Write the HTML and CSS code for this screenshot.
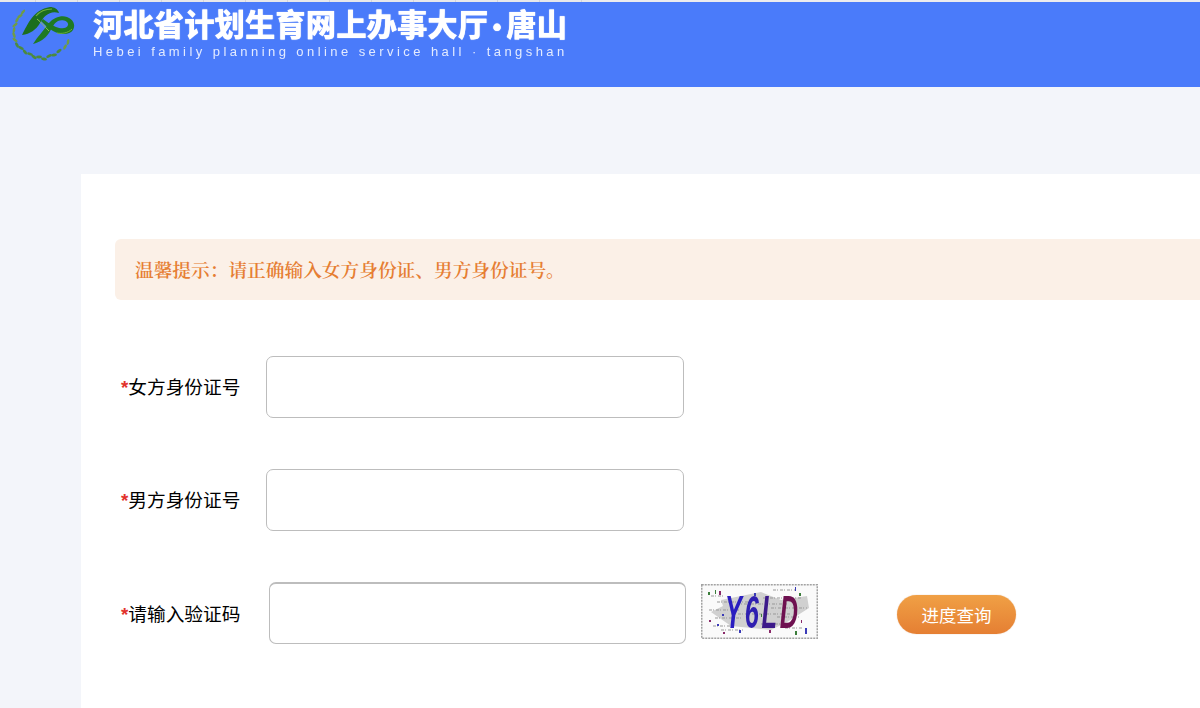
FILE: index.html
```html
<!DOCTYPE html>
<html lang="zh-CN">
<head>
<meta charset="utf-8">
<title>河北省计划生育网上办事大厅·唐山</title>
<link rel="stylesheet" href="styles.css">
</head>
<body>
<div class="topstrip"></div>
<header class="banner">
  <svg class="logo" width="66" height="60" viewBox="12 5 66 60">
    <g fill="#6f9c45">
      <ellipse cx="23" cy="12" rx="3" ry="1.3" transform="rotate(-50 23 12)"/>
      <ellipse cx="20" cy="16" rx="3" ry="1.3" transform="rotate(-30 20 16)"/>
      <ellipse cx="17" cy="20" rx="3" ry="1.3" transform="rotate(-60 17 20)"/>
      <ellipse cx="15" cy="25" rx="3" ry="1.3" transform="rotate(-35 15 25)"/>
      <ellipse cx="14" cy="30" rx="3" ry="1.3" transform="rotate(-80 14 30)"/>
      <ellipse cx="14" cy="35" rx="3" ry="1.3" transform="rotate(70 14 35)"/>
      <ellipse cx="15" cy="40" rx="3" ry="1.3" transform="rotate(40 15 40)"/>
      <ellipse cx="65" cy="47" rx="3" ry="1.3" transform="rotate(-60 65 47)"/>
      <ellipse cx="68" cy="42" rx="3" ry="1.3" transform="rotate(-80 68 42)"/>
    </g>
    <g fill="#4c8a3e">
      <ellipse cx="17" cy="45" rx="3" ry="1.4" transform="rotate(60 17 45)"/>
      <ellipse cx="21" cy="48" rx="3" ry="1.4" transform="rotate(25 21 48)"/>
      <ellipse cx="25" cy="52" rx="3" ry="1.4" transform="rotate(50 25 52)"/>
      <ellipse cx="30" cy="54" rx="3" ry="1.4" transform="rotate(15 30 54)"/>
      <ellipse cx="34" cy="57" rx="3" ry="1.4" transform="rotate(35 34 57)"/>
      <ellipse cx="39" cy="57" rx="3" ry="1.4" transform="rotate(0 39 57)"/>
      <ellipse cx="44" cy="59" rx="3" ry="1.4" transform="rotate(10 44 59)"/>
      <ellipse cx="49" cy="56" rx="3" ry="1.4" transform="rotate(-25 49 56)"/>
      <ellipse cx="54" cy="55" rx="3" ry="1.4" transform="rotate(-10 54 55)"/>
      <ellipse cx="59" cy="51" rx="3" ry="1.4" transform="rotate(-35 59 51)"/>
    </g>
    <path d="M22 35C28 24 33 10 50 7C54 7 58 9 59 13C50 10 44 16 40 23C36 30 30 34 22 35Z" fill="#1c6e1e"/>
    <path d="M33 44C38 36 44 30 49 23C54 17 62 15 67 17C73 19 76 25 73 30C70 35 60 35 53 31C48 28 45 25 41 21L43 19C47 22 51 25 56 27C61 29 67 29 68 25C69 21 62 19 58 21C54 23 52 28 49 33C45 39 40 42 33 44Z" fill="#1f7a24"/>
    <path d="M37 19C41 22 45 27 49 31" stroke="#8fc04e" stroke-width="1" fill="none"/>
    <path d="M36 16C40 11 46 9 52 9" stroke="#6fae3a" stroke-width="1.2" fill="none"/>
    <path d="M57 33C62 34 68 33 72 29" stroke="#6fae3a" stroke-width="1" fill="none"/>
  </svg>
  <div class="brand">
    <div class="brand-cn">河北省计划生育网上办事大厅<span class="dot">•</span>唐山</div>
    <div class="brand-en">Hebei family planning online service hall · tangshan</div>
  </div>
</header>
<main class="card">
  <div class="notice">温馨提示：请正确输入女方身份证、男方身份证号。</div>
  <form class="form">
    <div class="row">
      <label class="label"><span class="req">*</span>女方身份证号</label>
      <input class="field" type="text">
    </div>
    <div class="row">
      <label class="label"><span class="req">*</span>男方身份证号</label>
      <input class="field" type="text">
    </div>
    <div class="row row-code">
      <label class="label"><span class="req">*</span>请输入验证码</label>
      <input class="field field-code" type="text">
      <svg class="captcha" width="117" height="55" viewBox="0 0 117 55">
        <rect width="117" height="55" fill="#fafafa"/>
        <path d="M20 16L60 8L80 16L106 12L108 24L86 38L70 46L30 42L10 28L22 22Z" fill="#bdbdbd" opacity=".7"/>
        <path d="M16 18h34M62 14h38M8 26h30M70 24h36M14 34h26M76 33h22M12 42h18M60 40h30M20 46h22M36 20h50M30 30h60M10 12h12M72 6h22M84 44h18" stroke="#999" stroke-width="1" stroke-dasharray="3 1 1 2" fill="none"/>
        <rect x=".75" y=".75" width="115.5" height="53.5" fill="none" stroke="#a2a2a2" stroke-width="1.5" stroke-dasharray="2 1"/>
        <text class="captcha-word" transform="translate(24 44) scale(.55 1)"><tspan class="captcha-a">Y</tspan><tspan class="captcha-b">6</tspan><tspan class="captcha-c">L</tspan><tspan class="captcha-d">D</tspan></text>
        <g fill="#3b7d3b"><rect x="7" y="8" width="2" height="3"/><rect x="14" y="6" width="1" height="4"/><rect x="98" y="9" width="2" height="3"/><rect x="94" y="47" width="2" height="4"/><rect x="60" y="30" width="1" height="3"/></g>
        <g fill="#3a3ab8"><rect x="53" y="9" width="2" height="3"/><rect x="21" y="30" width="2" height="2"/><rect x="38" y="46" width="2" height="3"/><rect x="104" y="44" width="2" height="6"/><rect x="94" y="3" width="1" height="4"/><rect x="16" y="40" width="2" height="2"/></g>
        <g fill="#8a2a6a"><rect x="18" y="7" width="2" height="4"/><rect x="8" y="36" width="2" height="2"/><rect x="68" y="46" width="2" height="3"/><rect x="22" y="48" width="2" height="2"/><rect x="100" y="36" width="1" height="3"/></g>
      </svg>
      <button class="submit" type="button">进度查询</button>
    </div>
  </form>
</main>
</body>
</html>
```

FILE: styles.css
```css
* { box-sizing: border-box; }
html, body { margin: 0; height: 708px; overflow: hidden; }
body { background: #f3f5fa; font-family: "Noto Sans CJK SC", "Liberation Sans", sans-serif; color: #000; }

.topstrip {
  height: 2px;
  background: repeating-linear-gradient(90deg, #e8e8ea 0 35px, #d4d4d8 35px 36px, #e8e8ea 36px 42px) no-repeat left top / 590px 2px, #ececee;
}
.banner {
  height: 85px;
  background: #4a7bfa;
  display: flex;
  align-items: flex-start;
  padding: 3px 0 0 12px;
}
.logo { flex: none; filter: blur(.35px); }
.brand { margin: 0 0 0 15px; color: #fff; white-space: nowrap; filter: blur(.3px); }
.brand-cn { font-size: 30.4px; line-height: 36px; font-weight: 900; text-shadow: 0 0 1px #fff; }
.dot { font-family: "Liberation Sans", sans-serif; font-size: 26px; margin: 0 4.5px; }
.brand-en { font-family: "Liberation Sans", sans-serif; font-size: 13px; line-height: 16px; letter-spacing: 3.43px; margin-top: -1px; color: #e3ebff; }

.card {
  margin: 87px 0 0 81px;
  height: 534px;
  background: #fff;
  padding: 65px 0 0 34px;
  overflow: hidden;
}
.notice {
  height: 61px;
  margin-right: -12px;
  padding-left: 20px;
  background: #fbf0e7;
  border-radius: 6px;
  color: #e67e33;
  font-family: "Noto Serif CJK SC", "Noto Sans CJK SC", serif;
  font-size: 18.7px;
  font-weight: 600;
  line-height: 59px;
}
.form { padding: 56px 0 0 6px; display: flex; flex-direction: column; gap: 51px; }
.row { display: flex; align-items: center; height: 62px; }
.label { width: 145px; flex: none; font-size: 18.7px; font-weight: 400; line-height: 24px; white-space: nowrap; }
.req { color: #e2322d; font-family: "Liberation Sans", sans-serif; font-weight: 700; }
.field {
  width: 418px;
  height: 62px;
  border: 1px solid #bdbdbd;
  border-radius: 7px;
  background: #fff;
  padding: 0 10px;
  outline: none;
}
.row-code .label { margin-top: 2px; }
.field-code { width: 417px; margin-left: 3px; border-top-width: 2px; }
.captcha { flex: none; margin: -4px 0 0 15px; }
.captcha-word { font-family: "Liberation Sans", sans-serif; font-weight: 700; font-style: italic; font-size: 46px; letter-spacing: 5px; filter: blur(.4px); }
.captcha-a { fill: #2a1ec0; }
.captcha-b { fill: #2f1fb0; }
.captcha-c { fill: #3c1a8a; }
.captcha-d { fill: #6e1050; }
.submit {
  margin: 2px 0 0 79px;
  width: 119px;
  height: 39px;
  border: 0;
  border-radius: 20px;
  background: linear-gradient(180deg, #f0a045 0%, #e57f33 100%);
  box-shadow: 0 0 1px rgba(190,110,40,.6);
  color: #fff;
  font-family: "Noto Sans CJK SC", sans-serif;
  font-size: 17.5px;
  font-weight: 400;
  padding: 0;
}
```
